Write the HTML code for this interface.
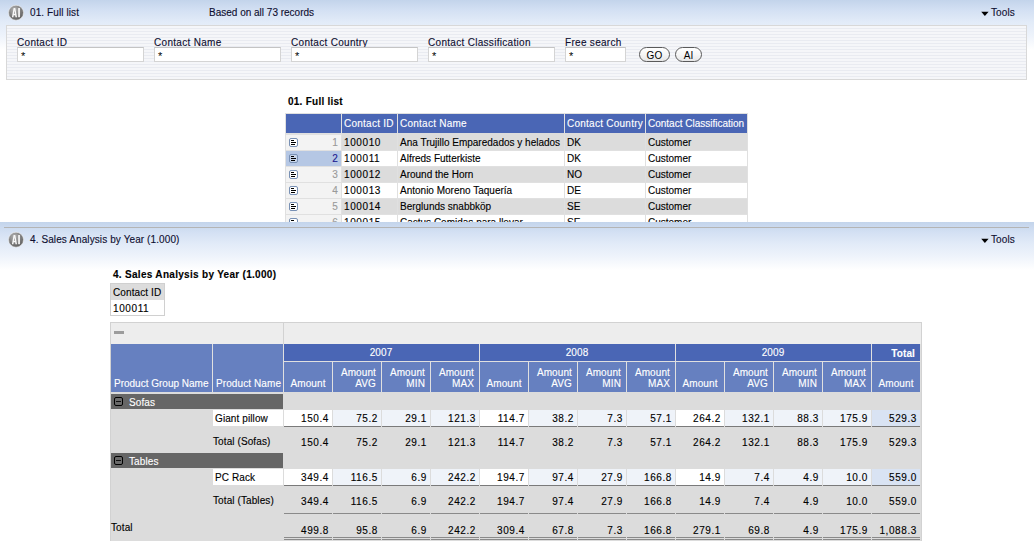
<!DOCTYPE html>
<html><head><meta charset="utf-8">
<style>
*{margin:0;padding:0;box-sizing:border-box}
html,body{width:1034px;height:553px;overflow:hidden;background:#fff}
body{font-family:"Liberation Sans",sans-serif;font-size:10px;color:#000;position:relative}
.a{position:absolute;white-space:nowrap}
.t{position:absolute;white-space:nowrap;line-height:12px;height:12px;-webkit-text-stroke:0.12px currentColor;letter-spacing:0.1px}
.n{letter-spacing:0.6px}
.b{font-weight:bold}
</style></head><body>
<div class="a" style="left:0px;top:0px;width:1034px;height:222px;background:linear-gradient(#c3d4eb 0,#d3e0f3 10px,#e2ebf8 22px,#eef3fb 36px,#fff 50px)"></div>
<svg class="a" style="left:8px;top:4px" width="17" height="17" viewBox="0 0 17 17">
<defs><radialGradient id="lg4" cx="0.4" cy="0.3" r="0.75"><stop offset="0" stop-color="#b4b4b4"/><stop offset="0.6" stop-color="#7c7c7c"/><stop offset="1" stop-color="#5c5c5c"/></radialGradient></defs>
<circle cx="8" cy="8.7" r="7.5" fill="url(#lg4)" stroke="#f4f4f4" stroke-width="0.6"/>
<path d="M3.9 13.2 L5.6 4 L7.3 4 L9 13.2 L7.5 13.2 L7.2 11.2 L5.7 11.2 L5.4 13.2 Z M5.9 9.8 L7.0 9.8 L6.45 6.2 Z" fill="#f8f8f8" fill-rule="evenodd"/>
<rect x="10.2" y="4" width="1.7" height="9.2" fill="#f8f8f8"/>
</svg>
<div class="t " style="left:30px;top:7px;color:#0e0e30">01. Full list</div>
<div class="t " style="left:209px;top:7px;color:#0e0e30;letter-spacing:0">Based on all 73 records</div>
<svg class="a" style="left:981px;top:11px" width="8" height="6" viewBox="0 0 8 6"><path d="M0.2 0.8 L7.6 0.8 L3.9 5.1 Z" fill="#000"/></svg>
<div class="t " style="left:991px;top:7px;color:#0e0e30">Tools</div>
<div class="a" style="left:6px;top:25px;width:1021px;height:55px;border:1px solid #d8d8d8;background:repeating-linear-gradient(#f5f6f9 0,#f5f6f9 2px,#e9ebf1 2px,#e9ebf1 3px)"></div>
<div class="t " style="left:17px;top:37px;color:#0e0e30;letter-spacing:0.3px">Contact ID</div>
<div class="a" style="left:17px;top:47px;width:127px;height:15px;background:#fff;border:1px solid #d4d4d4;border-top-color:#c4c4c4"></div>
<div class="t " style="left:21px;top:50px;font-size:11px;-webkit-text-stroke:0">*</div>
<div class="t " style="left:154px;top:37px;color:#0e0e30;letter-spacing:0.3px">Contact Name</div>
<div class="a" style="left:154px;top:47px;width:127px;height:15px;background:#fff;border:1px solid #d4d4d4;border-top-color:#c4c4c4"></div>
<div class="t " style="left:158px;top:50px;font-size:11px;-webkit-text-stroke:0">*</div>
<div class="t " style="left:291px;top:37px;color:#0e0e30;letter-spacing:0.3px">Contact Country</div>
<div class="a" style="left:291px;top:47px;width:127px;height:15px;background:#fff;border:1px solid #d4d4d4;border-top-color:#c4c4c4"></div>
<div class="t " style="left:295px;top:50px;font-size:11px;-webkit-text-stroke:0">*</div>
<div class="t " style="left:428px;top:37px;color:#0e0e30;letter-spacing:0.3px">Contact Classification</div>
<div class="a" style="left:428px;top:47px;width:127px;height:15px;background:#fff;border:1px solid #d4d4d4;border-top-color:#c4c4c4"></div>
<div class="t " style="left:432px;top:50px;font-size:11px;-webkit-text-stroke:0">*</div>
<div class="t " style="left:565px;top:37px;color:#0e0e30;letter-spacing:0.3px">Free search</div>
<div class="a" style="left:565px;top:47px;width:61px;height:15px;background:#fff;border:1px solid #d4d4d4;border-top-color:#c4c4c4"></div>
<div class="t " style="left:569px;top:50px;font-size:11px;-webkit-text-stroke:0">*</div>
<div class="a" style="left:639px;top:47px;width:31px;height:15px;border:1px solid #5a5a5a;border-radius:8px;background:linear-gradient(#ffffff 0,#f6f6f6 50%,#e6e6e6 100%)"></div>
<div class="t " style="left:554.5px;top:50px;width:200px;text-align:center;color:#000;-webkit-text-stroke:0">GO</div>
<div class="a" style="left:675px;top:47px;width:27px;height:15px;border:1px solid #5a5a5a;border-radius:8px;background:linear-gradient(#ffffff 0,#f6f6f6 50%,#e6e6e6 100%)"></div>
<div class="t " style="left:588.5px;top:50px;width:200px;text-align:center;color:#000;-webkit-text-stroke:0">AI</div>
<div class="t " style="left:288px;top:96px;font-weight:bold;letter-spacing:0.25px">01. Full list</div>
<div class="a" style="left:0;top:0;width:1034px;height:222px;overflow:hidden"><div class="a" style="left:285px;top:113px;width:463px;height:120px;background:#e0e0e0"></div>
<div class="a" style="left:286px;top:114px;width:55px;height:19px;background:#4a66b5"></div>
<div class="a" style="left:342px;top:114px;width:55px;height:19px;background:#4a66b5"></div>
<div class="a" style="left:398px;top:114px;width:166px;height:19px;background:#4a66b5"></div>
<div class="a" style="left:565px;top:114px;width:80px;height:19px;background:#4a66b5"></div>
<div class="a" style="left:646px;top:114px;width:101px;height:19px;background:#4a66b5"></div>
<div class="t " style="left:344px;top:118px;color:#fff;letter-spacing:0.25px">Contact ID</div>
<div class="t " style="left:400px;top:118px;color:#fff;letter-spacing:0.25px">Contact Name</div>
<div class="t " style="left:567px;top:118px;color:#fff;letter-spacing:0.25px">Contact Country</div>
<div class="t " style="left:648px;top:118px;color:#fff;letter-spacing:0">Contact Classification</div>
<div class="a" style="left:286px;top:135px;width:55px;height:15px;background:#f3f3f3"></div>
<div class="a" style="left:289px;top:138px;width:9px;height:9px;border:1px solid #7890b4;border-radius:2px;background:#fff"></div>
<div class="a" style="left:291px;top:140px;width:3px;height:1px;background:#000"></div>
<div class="a" style="left:291px;top:142px;width:5px;height:1px;background:#000"></div>
<div class="a" style="left:291px;top:144px;width:4px;height:1px;background:#000"></div>
<div class="t " style="left:138px;top:137px;width:200px;text-align:right;color:#9a9a9a">1</div>
<div class="a" style="left:342px;top:133px;width:55px;height:17px;background:#dcdcdc"></div>
<div class="t n" style="left:344px;top:137px;">100010</div>
<div class="a" style="left:398px;top:133px;width:166px;height:17px;background:#dcdcdc"></div>
<div class="t " style="left:400px;top:137px;letter-spacing:0">Ana Trujillo Emparedados y helados</div>
<div class="a" style="left:565px;top:133px;width:80px;height:17px;background:#dcdcdc"></div>
<div class="t " style="left:567px;top:137px;letter-spacing:0">DK</div>
<div class="a" style="left:646px;top:133px;width:101px;height:17px;background:#dcdcdc"></div>
<div class="t " style="left:648px;top:137px;letter-spacing:0">Customer</div>
<div class="a" style="left:286px;top:151px;width:55px;height:15px;background:#b5c7e4"></div>
<div class="a" style="left:289px;top:154px;width:9px;height:9px;border:1px solid #7890b4;border-radius:2px;background:#c9d6ea"></div>
<div class="a" style="left:291px;top:156px;width:3px;height:1px;background:#000"></div>
<div class="a" style="left:291px;top:158px;width:5px;height:1px;background:#000"></div>
<div class="a" style="left:291px;top:160px;width:4px;height:1px;background:#000"></div>
<div class="t " style="left:138px;top:153px;width:200px;text-align:right;color:#1a1a90">2</div>
<div class="a" style="left:342px;top:151px;width:55px;height:15px;background:#fff"></div>
<div class="t n" style="left:344px;top:153px;">100011</div>
<div class="a" style="left:398px;top:151px;width:166px;height:15px;background:#fff"></div>
<div class="t " style="left:400px;top:153px;letter-spacing:0">Alfreds Futterkiste</div>
<div class="a" style="left:565px;top:151px;width:80px;height:15px;background:#fff"></div>
<div class="t " style="left:567px;top:153px;letter-spacing:0">DK</div>
<div class="a" style="left:646px;top:151px;width:101px;height:15px;background:#fff"></div>
<div class="t " style="left:648px;top:153px;letter-spacing:0">Customer</div>
<div class="a" style="left:286px;top:167px;width:55px;height:15px;background:#f3f3f3"></div>
<div class="a" style="left:289px;top:170px;width:9px;height:9px;border:1px solid #7890b4;border-radius:2px;background:#fff"></div>
<div class="a" style="left:291px;top:172px;width:3px;height:1px;background:#000"></div>
<div class="a" style="left:291px;top:174px;width:5px;height:1px;background:#000"></div>
<div class="a" style="left:291px;top:176px;width:4px;height:1px;background:#000"></div>
<div class="t " style="left:138px;top:169px;width:200px;text-align:right;color:#9a9a9a">3</div>
<div class="a" style="left:342px;top:167px;width:55px;height:15px;background:#dcdcdc"></div>
<div class="t n" style="left:344px;top:169px;">100012</div>
<div class="a" style="left:398px;top:167px;width:166px;height:15px;background:#dcdcdc"></div>
<div class="t " style="left:400px;top:169px;letter-spacing:0">Around the Horn</div>
<div class="a" style="left:565px;top:167px;width:80px;height:15px;background:#dcdcdc"></div>
<div class="t " style="left:567px;top:169px;letter-spacing:0">NO</div>
<div class="a" style="left:646px;top:167px;width:101px;height:15px;background:#dcdcdc"></div>
<div class="t " style="left:648px;top:169px;letter-spacing:0">Customer</div>
<div class="a" style="left:286px;top:183px;width:55px;height:15px;background:#f3f3f3"></div>
<div class="a" style="left:289px;top:186px;width:9px;height:9px;border:1px solid #7890b4;border-radius:2px;background:#fff"></div>
<div class="a" style="left:291px;top:188px;width:3px;height:1px;background:#000"></div>
<div class="a" style="left:291px;top:190px;width:5px;height:1px;background:#000"></div>
<div class="a" style="left:291px;top:192px;width:4px;height:1px;background:#000"></div>
<div class="t " style="left:138px;top:185px;width:200px;text-align:right;color:#9a9a9a">4</div>
<div class="a" style="left:342px;top:183px;width:55px;height:15px;background:#fff"></div>
<div class="t n" style="left:344px;top:185px;">100013</div>
<div class="a" style="left:398px;top:183px;width:166px;height:15px;background:#fff"></div>
<div class="t " style="left:400px;top:185px;letter-spacing:0">Antonio Moreno Taquería</div>
<div class="a" style="left:565px;top:183px;width:80px;height:15px;background:#fff"></div>
<div class="t " style="left:567px;top:185px;letter-spacing:0">DE</div>
<div class="a" style="left:646px;top:183px;width:101px;height:15px;background:#fff"></div>
<div class="t " style="left:648px;top:185px;letter-spacing:0">Customer</div>
<div class="a" style="left:286px;top:199px;width:55px;height:15px;background:#f3f3f3"></div>
<div class="a" style="left:289px;top:202px;width:9px;height:9px;border:1px solid #7890b4;border-radius:2px;background:#fff"></div>
<div class="a" style="left:291px;top:204px;width:3px;height:1px;background:#000"></div>
<div class="a" style="left:291px;top:206px;width:5px;height:1px;background:#000"></div>
<div class="a" style="left:291px;top:208px;width:4px;height:1px;background:#000"></div>
<div class="t " style="left:138px;top:201px;width:200px;text-align:right;color:#9a9a9a">5</div>
<div class="a" style="left:342px;top:199px;width:55px;height:15px;background:#dcdcdc"></div>
<div class="t n" style="left:344px;top:201px;">100014</div>
<div class="a" style="left:398px;top:199px;width:166px;height:15px;background:#dcdcdc"></div>
<div class="t " style="left:400px;top:201px;letter-spacing:0">Berglunds snabbköp</div>
<div class="a" style="left:565px;top:199px;width:80px;height:15px;background:#dcdcdc"></div>
<div class="t " style="left:567px;top:201px;letter-spacing:0">SE</div>
<div class="a" style="left:646px;top:199px;width:101px;height:15px;background:#dcdcdc"></div>
<div class="t " style="left:648px;top:201px;letter-spacing:0">Customer</div>
<div class="a" style="left:286px;top:215px;width:55px;height:15px;background:#f3f3f3"></div>
<div class="a" style="left:289px;top:218px;width:9px;height:9px;border:1px solid #7890b4;border-radius:2px;background:#fff"></div>
<div class="a" style="left:291px;top:220px;width:3px;height:1px;background:#000"></div>
<div class="a" style="left:291px;top:222px;width:5px;height:1px;background:#000"></div>
<div class="a" style="left:291px;top:224px;width:4px;height:1px;background:#000"></div>
<div class="t " style="left:138px;top:217px;width:200px;text-align:right;color:#9a9a9a">6</div>
<div class="a" style="left:342px;top:215px;width:55px;height:15px;background:#fff"></div>
<div class="t n" style="left:344px;top:217px;">100015</div>
<div class="a" style="left:398px;top:215px;width:166px;height:15px;background:#fff"></div>
<div class="t " style="left:400px;top:217px;letter-spacing:0">Cactus Comidas para llevar</div>
<div class="a" style="left:565px;top:215px;width:80px;height:15px;background:#fff"></div>
<div class="t " style="left:567px;top:217px;letter-spacing:0">SE</div>
<div class="a" style="left:646px;top:215px;width:101px;height:15px;background:#fff"></div>
<div class="t " style="left:648px;top:217px;letter-spacing:0">Customer</div>
</div>
<div class="a" style="left:0px;top:222px;width:1034px;height:331px;background:linear-gradient(#c3d4eb 0,#d3e0f3 10px,#e2ebf8 22px,#eef3fb 34px,#fff 48px)"></div>
<div class="a" style="left:4px;top:227px;width:1025px;height:1px;background:#b4b4b4"></div>
<svg class="a" style="left:8px;top:231px" width="17" height="17" viewBox="0 0 17 17">
<defs><radialGradient id="lg231" cx="0.4" cy="0.3" r="0.75"><stop offset="0" stop-color="#b4b4b4"/><stop offset="0.6" stop-color="#7c7c7c"/><stop offset="1" stop-color="#5c5c5c"/></radialGradient></defs>
<circle cx="8" cy="8.7" r="7.5" fill="url(#lg231)" stroke="#f4f4f4" stroke-width="0.6"/>
<path d="M3.9 13.2 L5.6 4 L7.3 4 L9 13.2 L7.5 13.2 L7.2 11.2 L5.7 11.2 L5.4 13.2 Z M5.9 9.8 L7.0 9.8 L6.45 6.2 Z" fill="#f8f8f8" fill-rule="evenodd"/>
<rect x="10.2" y="4" width="1.7" height="9.2" fill="#f8f8f8"/>
</svg>
<div class="t " style="left:30px;top:234px;color:#0e0e30">4. Sales Analysis by Year (1.000)</div>
<svg class="a" style="left:981px;top:238px" width="8" height="6" viewBox="0 0 8 6"><path d="M0.2 0.8 L7.6 0.8 L3.9 5.1 Z" fill="#000"/></svg>
<div class="t " style="left:991px;top:234px;color:#0e0e30">Tools</div>
<div class="t " style="left:113px;top:269px;font-weight:bold;letter-spacing:0.3px">4. Sales Analysis by Year (1.000)</div>
<div class="a" style="left:110px;top:283px;width:55px;height:33px;border:1px solid #d0d0d0;background:#fff"></div>
<div class="a" style="left:111px;top:284px;width:53px;height:16px;background:#dcdcdc"></div>
<div class="t " style="left:113px;top:287px;">Contact ID</div>
<div class="t n" style="left:113px;top:303px;">100011</div>
<div class="a" style="left:110px;top:322px;width:812px;height:219px;background:#dcdcdc;border:1px solid #d2d2d2;border-bottom:none"></div>
<div class="a" style="left:111px;top:323px;width:810px;height:21px;background:#ededed"></div>
<div class="a" style="left:283px;top:323px;width:1px;height:21px;background:#d2d2d2"></div>
<div class="a" style="left:114px;top:331px;width:10px;height:3px;background:#9c9c9c"></div>
<div class="a" style="left:111px;top:344px;width:810px;height:48px;background:#e0e0e0"></div>
<div class="a" style="left:111px;top:344px;width:101px;height:48px;background:#6680c0"></div>
<div class="a" style="left:213px;top:344px;width:70px;height:48px;background:#6680c0"></div>
<div class="t " style="left:114px;top:378px;color:#fff;letter-spacing:0">Product Group Name</div>
<div class="t " style="left:216px;top:378px;color:#fff">Product Name</div>
<div class="a" style="left:284px;top:344px;width:195px;height:17px;background:#4a66b5"></div>
<div class="t " style="left:281px;top:347px;width:200px;text-align:center;color:#fff">2007</div>
<div class="a" style="left:284px;top:362px;width:48px;height:30px;background:#6680c0"></div>
<div class="t " style="left:208px;top:378px;width:200px;text-align:center;color:#fff">Amount</div>
<div class="a" style="left:333px;top:362px;width:48px;height:30px;background:#6680c0"></div>
<div class="t " style="left:176px;top:367px;width:200px;text-align:right;color:#fff">Amount</div>
<div class="t " style="left:176px;top:378px;width:200px;text-align:right;color:#fff">AVG</div>
<div class="a" style="left:382px;top:362px;width:48px;height:30px;background:#6680c0"></div>
<div class="t " style="left:225px;top:367px;width:200px;text-align:right;color:#fff">Amount</div>
<div class="t " style="left:225px;top:378px;width:200px;text-align:right;color:#fff">MIN</div>
<div class="a" style="left:431px;top:362px;width:48px;height:30px;background:#6680c0"></div>
<div class="t " style="left:274px;top:367px;width:200px;text-align:right;color:#fff">Amount</div>
<div class="t " style="left:274px;top:378px;width:200px;text-align:right;color:#fff">MAX</div>
<div class="a" style="left:480px;top:344px;width:195px;height:17px;background:#4a66b5"></div>
<div class="t " style="left:477px;top:347px;width:200px;text-align:center;color:#fff">2008</div>
<div class="a" style="left:480px;top:362px;width:48px;height:30px;background:#6680c0"></div>
<div class="t " style="left:404px;top:378px;width:200px;text-align:center;color:#fff">Amount</div>
<div class="a" style="left:529px;top:362px;width:48px;height:30px;background:#6680c0"></div>
<div class="t " style="left:372px;top:367px;width:200px;text-align:right;color:#fff">Amount</div>
<div class="t " style="left:372px;top:378px;width:200px;text-align:right;color:#fff">AVG</div>
<div class="a" style="left:578px;top:362px;width:48px;height:30px;background:#6680c0"></div>
<div class="t " style="left:421px;top:367px;width:200px;text-align:right;color:#fff">Amount</div>
<div class="t " style="left:421px;top:378px;width:200px;text-align:right;color:#fff">MIN</div>
<div class="a" style="left:627px;top:362px;width:48px;height:30px;background:#6680c0"></div>
<div class="t " style="left:470px;top:367px;width:200px;text-align:right;color:#fff">Amount</div>
<div class="t " style="left:470px;top:378px;width:200px;text-align:right;color:#fff">MAX</div>
<div class="a" style="left:676px;top:344px;width:195px;height:17px;background:#4a66b5"></div>
<div class="t " style="left:673px;top:347px;width:200px;text-align:center;color:#fff">2009</div>
<div class="a" style="left:676px;top:362px;width:48px;height:30px;background:#6680c0"></div>
<div class="t " style="left:600px;top:378px;width:200px;text-align:center;color:#fff">Amount</div>
<div class="a" style="left:725px;top:362px;width:48px;height:30px;background:#6680c0"></div>
<div class="t " style="left:568px;top:367px;width:200px;text-align:right;color:#fff">Amount</div>
<div class="t " style="left:568px;top:378px;width:200px;text-align:right;color:#fff">AVG</div>
<div class="a" style="left:774px;top:362px;width:48px;height:30px;background:#6680c0"></div>
<div class="t " style="left:617px;top:367px;width:200px;text-align:right;color:#fff">Amount</div>
<div class="t " style="left:617px;top:378px;width:200px;text-align:right;color:#fff">MIN</div>
<div class="a" style="left:823px;top:362px;width:48px;height:30px;background:#6680c0"></div>
<div class="t " style="left:666px;top:367px;width:200px;text-align:right;color:#fff">Amount</div>
<div class="t " style="left:666px;top:378px;width:200px;text-align:right;color:#fff">MAX</div>
<div class="a" style="left:872px;top:344px;width:48px;height:17px;background:#4a66b5"></div>
<div class="t " style="left:715px;top:348px;width:200px;text-align:right;color:#fff;font-weight:bold">Total</div>
<div class="a" style="left:872px;top:362px;width:48px;height:30px;background:#6680c0"></div>
<div class="t " style="left:796px;top:378px;width:200px;text-align:center;color:#fff">Amount</div>
<div class="a" style="left:111px;top:394px;width:172px;height:15px;background:#666"></div>
<div class="a" style="left:114px;top:397px;width:9px;height:9px;border:1px solid #000;border-radius:2px;background:#6a6a6a"></div>
<div class="a" style="left:116px;top:401px;width:5px;height:1px;background:#111"></div>
<div class="t " style="left:129px;top:397px;color:#fff">Sofas</div>
<div class="a" style="left:213px;top:410px;width:70px;height:16px;background:#fff"></div>
<div class="t " style="left:215px;top:413px;">Giant pillow</div>
<div class="a" style="left:284px;top:410px;width:48px;height:16px;background:#fff"></div>
<div class="a" style="left:284px;top:426px;width:48px;height:1px;background:#7a7a7a"></div>
<div class="t n" style="left:129px;top:413px;width:200px;text-align:right;">150.4</div>
<div class="a" style="left:333px;top:410px;width:48px;height:16px;background:#eff3f9"></div>
<div class="a" style="left:333px;top:426px;width:48px;height:1px;background:#7a7a7a"></div>
<div class="t n" style="left:178px;top:413px;width:200px;text-align:right;">75.2</div>
<div class="a" style="left:382px;top:410px;width:48px;height:16px;background:#eff3f9"></div>
<div class="a" style="left:382px;top:426px;width:48px;height:1px;background:#7a7a7a"></div>
<div class="t n" style="left:227px;top:413px;width:200px;text-align:right;">29.1</div>
<div class="a" style="left:431px;top:410px;width:48px;height:16px;background:#eff3f9"></div>
<div class="a" style="left:431px;top:426px;width:48px;height:1px;background:#7a7a7a"></div>
<div class="t n" style="left:276px;top:413px;width:200px;text-align:right;">121.3</div>
<div class="a" style="left:480px;top:410px;width:48px;height:16px;background:#fff"></div>
<div class="a" style="left:480px;top:426px;width:48px;height:1px;background:#7a7a7a"></div>
<div class="t n" style="left:325px;top:413px;width:200px;text-align:right;">114.7</div>
<div class="a" style="left:529px;top:410px;width:48px;height:16px;background:#eff3f9"></div>
<div class="a" style="left:529px;top:426px;width:48px;height:1px;background:#7a7a7a"></div>
<div class="t n" style="left:374px;top:413px;width:200px;text-align:right;">38.2</div>
<div class="a" style="left:578px;top:410px;width:48px;height:16px;background:#eff3f9"></div>
<div class="a" style="left:578px;top:426px;width:48px;height:1px;background:#7a7a7a"></div>
<div class="t n" style="left:423px;top:413px;width:200px;text-align:right;">7.3</div>
<div class="a" style="left:627px;top:410px;width:48px;height:16px;background:#eff3f9"></div>
<div class="a" style="left:627px;top:426px;width:48px;height:1px;background:#7a7a7a"></div>
<div class="t n" style="left:472px;top:413px;width:200px;text-align:right;">57.1</div>
<div class="a" style="left:676px;top:410px;width:48px;height:16px;background:#fff"></div>
<div class="a" style="left:676px;top:426px;width:48px;height:1px;background:#7a7a7a"></div>
<div class="t n" style="left:521px;top:413px;width:200px;text-align:right;">264.2</div>
<div class="a" style="left:725px;top:410px;width:48px;height:16px;background:#eff3f9"></div>
<div class="a" style="left:725px;top:426px;width:48px;height:1px;background:#7a7a7a"></div>
<div class="t n" style="left:570px;top:413px;width:200px;text-align:right;">132.1</div>
<div class="a" style="left:774px;top:410px;width:48px;height:16px;background:#eff3f9"></div>
<div class="a" style="left:774px;top:426px;width:48px;height:1px;background:#7a7a7a"></div>
<div class="t n" style="left:619px;top:413px;width:200px;text-align:right;">88.3</div>
<div class="a" style="left:823px;top:410px;width:48px;height:16px;background:#eff3f9"></div>
<div class="a" style="left:823px;top:426px;width:48px;height:1px;background:#7a7a7a"></div>
<div class="t n" style="left:668px;top:413px;width:200px;text-align:right;">175.9</div>
<div class="a" style="left:872px;top:410px;width:48px;height:16px;background:#d9e3f3"></div>
<div class="a" style="left:872px;top:426px;width:48px;height:1px;background:#7a7a7a"></div>
<div class="t n" style="left:717px;top:413px;width:200px;text-align:right;">529.3</div>
<div class="t " style="left:213px;top:436px;">Total (Sofas)</div>
<div class="t n" style="left:129px;top:437px;width:200px;text-align:right;">150.4</div>
<div class="t n" style="left:178px;top:437px;width:200px;text-align:right;">75.2</div>
<div class="t n" style="left:227px;top:437px;width:200px;text-align:right;">29.1</div>
<div class="t n" style="left:276px;top:437px;width:200px;text-align:right;">121.3</div>
<div class="t n" style="left:325px;top:437px;width:200px;text-align:right;">114.7</div>
<div class="t n" style="left:374px;top:437px;width:200px;text-align:right;">38.2</div>
<div class="t n" style="left:423px;top:437px;width:200px;text-align:right;">7.3</div>
<div class="t n" style="left:472px;top:437px;width:200px;text-align:right;">57.1</div>
<div class="t n" style="left:521px;top:437px;width:200px;text-align:right;">264.2</div>
<div class="t n" style="left:570px;top:437px;width:200px;text-align:right;">132.1</div>
<div class="t n" style="left:619px;top:437px;width:200px;text-align:right;">88.3</div>
<div class="t n" style="left:668px;top:437px;width:200px;text-align:right;">175.9</div>
<div class="t n" style="left:717px;top:437px;width:200px;text-align:right;">529.3</div>
<div class="a" style="left:111px;top:453px;width:172px;height:15px;background:#666"></div>
<div class="a" style="left:114px;top:456px;width:9px;height:9px;border:1px solid #000;border-radius:2px;background:#6a6a6a"></div>
<div class="a" style="left:116px;top:460px;width:5px;height:1px;background:#111"></div>
<div class="t " style="left:129px;top:456px;color:#fff">Tables</div>
<div class="a" style="left:213px;top:469px;width:70px;height:16px;background:#fff"></div>
<div class="t " style="left:215px;top:472px;">PC Rack</div>
<div class="a" style="left:284px;top:469px;width:48px;height:16px;background:#fff"></div>
<div class="a" style="left:284px;top:485px;width:48px;height:1px;background:#7a7a7a"></div>
<div class="t n" style="left:129px;top:472px;width:200px;text-align:right;">349.4</div>
<div class="a" style="left:333px;top:469px;width:48px;height:16px;background:#eff3f9"></div>
<div class="a" style="left:333px;top:485px;width:48px;height:1px;background:#7a7a7a"></div>
<div class="t n" style="left:178px;top:472px;width:200px;text-align:right;">116.5</div>
<div class="a" style="left:382px;top:469px;width:48px;height:16px;background:#eff3f9"></div>
<div class="a" style="left:382px;top:485px;width:48px;height:1px;background:#7a7a7a"></div>
<div class="t n" style="left:227px;top:472px;width:200px;text-align:right;">6.9</div>
<div class="a" style="left:431px;top:469px;width:48px;height:16px;background:#eff3f9"></div>
<div class="a" style="left:431px;top:485px;width:48px;height:1px;background:#7a7a7a"></div>
<div class="t n" style="left:276px;top:472px;width:200px;text-align:right;">242.2</div>
<div class="a" style="left:480px;top:469px;width:48px;height:16px;background:#fff"></div>
<div class="a" style="left:480px;top:485px;width:48px;height:1px;background:#7a7a7a"></div>
<div class="t n" style="left:325px;top:472px;width:200px;text-align:right;">194.7</div>
<div class="a" style="left:529px;top:469px;width:48px;height:16px;background:#eff3f9"></div>
<div class="a" style="left:529px;top:485px;width:48px;height:1px;background:#7a7a7a"></div>
<div class="t n" style="left:374px;top:472px;width:200px;text-align:right;">97.4</div>
<div class="a" style="left:578px;top:469px;width:48px;height:16px;background:#eff3f9"></div>
<div class="a" style="left:578px;top:485px;width:48px;height:1px;background:#7a7a7a"></div>
<div class="t n" style="left:423px;top:472px;width:200px;text-align:right;">27.9</div>
<div class="a" style="left:627px;top:469px;width:48px;height:16px;background:#eff3f9"></div>
<div class="a" style="left:627px;top:485px;width:48px;height:1px;background:#7a7a7a"></div>
<div class="t n" style="left:472px;top:472px;width:200px;text-align:right;">166.8</div>
<div class="a" style="left:676px;top:469px;width:48px;height:16px;background:#fff"></div>
<div class="a" style="left:676px;top:485px;width:48px;height:1px;background:#7a7a7a"></div>
<div class="t n" style="left:521px;top:472px;width:200px;text-align:right;">14.9</div>
<div class="a" style="left:725px;top:469px;width:48px;height:16px;background:#eff3f9"></div>
<div class="a" style="left:725px;top:485px;width:48px;height:1px;background:#7a7a7a"></div>
<div class="t n" style="left:570px;top:472px;width:200px;text-align:right;">7.4</div>
<div class="a" style="left:774px;top:469px;width:48px;height:16px;background:#eff3f9"></div>
<div class="a" style="left:774px;top:485px;width:48px;height:1px;background:#7a7a7a"></div>
<div class="t n" style="left:619px;top:472px;width:200px;text-align:right;">4.9</div>
<div class="a" style="left:823px;top:469px;width:48px;height:16px;background:#eff3f9"></div>
<div class="a" style="left:823px;top:485px;width:48px;height:1px;background:#7a7a7a"></div>
<div class="t n" style="left:668px;top:472px;width:200px;text-align:right;">10.0</div>
<div class="a" style="left:872px;top:469px;width:48px;height:16px;background:#d9e3f3"></div>
<div class="a" style="left:872px;top:485px;width:48px;height:1px;background:#7a7a7a"></div>
<div class="t n" style="left:717px;top:472px;width:200px;text-align:right;">559.0</div>
<div class="t " style="left:213px;top:495px;">Total (Tables)</div>
<div class="t n" style="left:129px;top:496px;width:200px;text-align:right;">349.4</div>
<div class="t n" style="left:178px;top:496px;width:200px;text-align:right;">116.5</div>
<div class="t n" style="left:227px;top:496px;width:200px;text-align:right;">6.9</div>
<div class="t n" style="left:276px;top:496px;width:200px;text-align:right;">242.2</div>
<div class="t n" style="left:325px;top:496px;width:200px;text-align:right;">194.7</div>
<div class="t n" style="left:374px;top:496px;width:200px;text-align:right;">97.4</div>
<div class="t n" style="left:423px;top:496px;width:200px;text-align:right;">27.9</div>
<div class="t n" style="left:472px;top:496px;width:200px;text-align:right;">166.8</div>
<div class="t n" style="left:521px;top:496px;width:200px;text-align:right;">14.9</div>
<div class="t n" style="left:570px;top:496px;width:200px;text-align:right;">7.4</div>
<div class="t n" style="left:619px;top:496px;width:200px;text-align:right;">4.9</div>
<div class="t n" style="left:668px;top:496px;width:200px;text-align:right;">10.0</div>
<div class="t n" style="left:717px;top:496px;width:200px;text-align:right;">559.0</div>
<div class="a" style="left:284px;top:513px;width:48px;height:1px;background:#8a8a8a"></div>
<div class="a" style="left:284px;top:537px;width:48px;height:1px;background:#8a8a8a"></div>
<div class="a" style="left:284px;top:539px;width:48px;height:1px;background:#8a8a8a"></div>
<div class="a" style="left:333px;top:513px;width:48px;height:1px;background:#8a8a8a"></div>
<div class="a" style="left:333px;top:537px;width:48px;height:1px;background:#8a8a8a"></div>
<div class="a" style="left:333px;top:539px;width:48px;height:1px;background:#8a8a8a"></div>
<div class="a" style="left:382px;top:513px;width:48px;height:1px;background:#8a8a8a"></div>
<div class="a" style="left:382px;top:537px;width:48px;height:1px;background:#8a8a8a"></div>
<div class="a" style="left:382px;top:539px;width:48px;height:1px;background:#8a8a8a"></div>
<div class="a" style="left:431px;top:513px;width:48px;height:1px;background:#8a8a8a"></div>
<div class="a" style="left:431px;top:537px;width:48px;height:1px;background:#8a8a8a"></div>
<div class="a" style="left:431px;top:539px;width:48px;height:1px;background:#8a8a8a"></div>
<div class="a" style="left:480px;top:513px;width:48px;height:1px;background:#8a8a8a"></div>
<div class="a" style="left:480px;top:537px;width:48px;height:1px;background:#8a8a8a"></div>
<div class="a" style="left:480px;top:539px;width:48px;height:1px;background:#8a8a8a"></div>
<div class="a" style="left:529px;top:513px;width:48px;height:1px;background:#8a8a8a"></div>
<div class="a" style="left:529px;top:537px;width:48px;height:1px;background:#8a8a8a"></div>
<div class="a" style="left:529px;top:539px;width:48px;height:1px;background:#8a8a8a"></div>
<div class="a" style="left:578px;top:513px;width:48px;height:1px;background:#8a8a8a"></div>
<div class="a" style="left:578px;top:537px;width:48px;height:1px;background:#8a8a8a"></div>
<div class="a" style="left:578px;top:539px;width:48px;height:1px;background:#8a8a8a"></div>
<div class="a" style="left:627px;top:513px;width:48px;height:1px;background:#8a8a8a"></div>
<div class="a" style="left:627px;top:537px;width:48px;height:1px;background:#8a8a8a"></div>
<div class="a" style="left:627px;top:539px;width:48px;height:1px;background:#8a8a8a"></div>
<div class="a" style="left:676px;top:513px;width:48px;height:1px;background:#8a8a8a"></div>
<div class="a" style="left:676px;top:537px;width:48px;height:1px;background:#8a8a8a"></div>
<div class="a" style="left:676px;top:539px;width:48px;height:1px;background:#8a8a8a"></div>
<div class="a" style="left:725px;top:513px;width:48px;height:1px;background:#8a8a8a"></div>
<div class="a" style="left:725px;top:537px;width:48px;height:1px;background:#8a8a8a"></div>
<div class="a" style="left:725px;top:539px;width:48px;height:1px;background:#8a8a8a"></div>
<div class="a" style="left:774px;top:513px;width:48px;height:1px;background:#8a8a8a"></div>
<div class="a" style="left:774px;top:537px;width:48px;height:1px;background:#8a8a8a"></div>
<div class="a" style="left:774px;top:539px;width:48px;height:1px;background:#8a8a8a"></div>
<div class="a" style="left:823px;top:513px;width:48px;height:1px;background:#8a8a8a"></div>
<div class="a" style="left:823px;top:537px;width:48px;height:1px;background:#8a8a8a"></div>
<div class="a" style="left:823px;top:539px;width:48px;height:1px;background:#8a8a8a"></div>
<div class="a" style="left:872px;top:513px;width:48px;height:1px;background:#8a8a8a"></div>
<div class="a" style="left:872px;top:537px;width:48px;height:1px;background:#8a8a8a"></div>
<div class="a" style="left:872px;top:539px;width:48px;height:1px;background:#8a8a8a"></div>
<div class="t " style="left:111px;top:522px;">Total</div>
<div class="t n" style="left:129px;top:525px;width:200px;text-align:right;">499.8</div>
<div class="t n" style="left:178px;top:525px;width:200px;text-align:right;">95.8</div>
<div class="t n" style="left:227px;top:525px;width:200px;text-align:right;">6.9</div>
<div class="t n" style="left:276px;top:525px;width:200px;text-align:right;">242.2</div>
<div class="t n" style="left:325px;top:525px;width:200px;text-align:right;">309.4</div>
<div class="t n" style="left:374px;top:525px;width:200px;text-align:right;">67.8</div>
<div class="t n" style="left:423px;top:525px;width:200px;text-align:right;">7.3</div>
<div class="t n" style="left:472px;top:525px;width:200px;text-align:right;">166.8</div>
<div class="t n" style="left:521px;top:525px;width:200px;text-align:right;">279.1</div>
<div class="t n" style="left:570px;top:525px;width:200px;text-align:right;">69.8</div>
<div class="t n" style="left:619px;top:525px;width:200px;text-align:right;">4.9</div>
<div class="t n" style="left:668px;top:525px;width:200px;text-align:right;">175.9</div>
<div class="t n" style="left:717px;top:525px;width:200px;text-align:right;">1,088.3</div>
</body></html>
